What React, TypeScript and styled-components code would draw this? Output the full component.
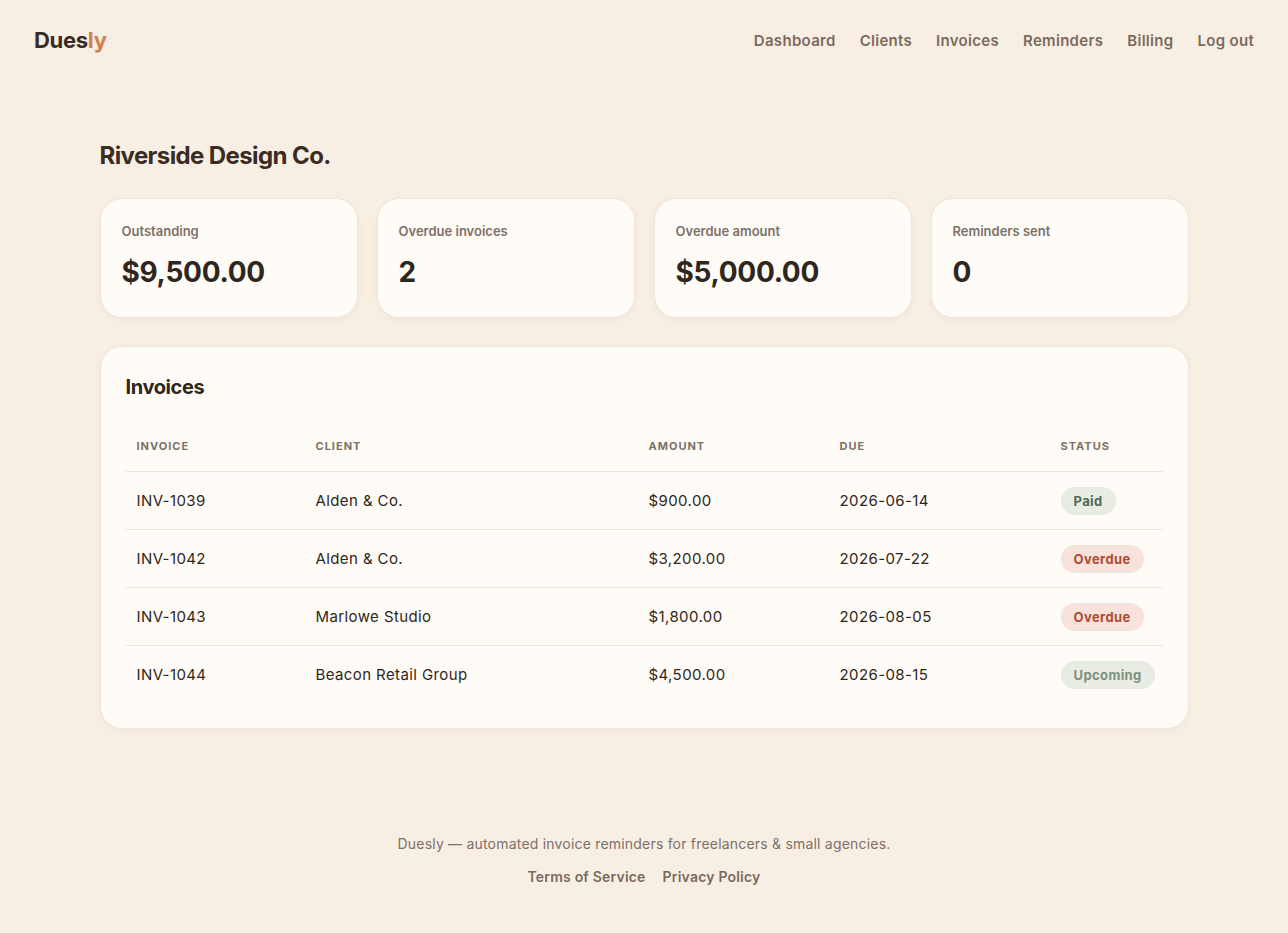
import React from 'react';
import styled, { createGlobalStyle } from 'styled-components';

const Global = createGlobalStyle`
  body { margin: 0; background: #f8efe4; font-family: Inter, "Open Sans", sans-serif; color: #2f2620; }
`;

const Header = styled.header`
  display: flex; align-items: center; justify-content: space-between;
  padding: 26px 34px 0 34px; height: 28px;
`;
const Logo = styled.div`
  font-size: 22px; font-weight: 700; letter-spacing: -0.3px; color: #3a2c22;
  span { color: #d27f4e; }
`;
const Nav = styled.nav`display: flex; gap: 24px;`;
const NavLink = styled.a`font-size: 15px; font-weight: 600; letter-spacing: 0.3px; color: #7a6a5e; text-decoration: none;`;

const Main = styled.main`width: 1089px; margin: 0 auto; padding-top: 87px;`;
const Title = styled.h1`font-size: 24px; font-weight: 700; letter-spacing: -0.6px; margin: 0 0 28px; color: #3a2c22;`;
const Stats = styled.div`display: grid; grid-template-columns: repeat(4, 1fr); gap: 19px;`;
const Card = styled.div`
  background: #fffcf7; border: 1px solid #efe5d9; border-radius: 22px;
  box-shadow: 0 2px 6px rgba(120, 90, 60, 0.06);
`;
const StatCard = styled(Card)`height: 120px; box-sizing: border-box; padding: 24px 21px;`;
const StatLabel = styled.div`font-size: 13px; font-weight: 600; color: #7d7068;`;
const StatValue = styled.div`font-size: 28px; font-weight: 700; letter-spacing: -0.3px; margin-top: 16px; color: #2f2620;`;

const TableCard = styled(Card)`margin-top: 28px; padding: 28px 25px 25px;`;
const CardTitle = styled.h2`font-size: 20px; font-weight: 700; letter-spacing: -0.4px; margin: 0 0 40px; color: #2f2620;`;
const Table = styled.table`width: 100%; border-collapse: collapse; table-layout: fixed;`;
const Th = styled.th<{ w?: number }>`
  text-align: left; font-size: 11px; font-weight: 700; letter-spacing: 1px; color: #7d7068;
  padding: 0 11px 18px; border-bottom: 1px solid #ece4da; width: ${p => (p.w ? `${p.w}px` : 'auto')};
`;
const Td = styled.td`font-size: 15px; color: #2f2620; padding: 0 11px; height: 57px; letter-spacing: 0.4px;`;
const Tr = styled.tr`& + & td { border-top: 1px solid #ece4da; }`;
const Badge = styled.span<{ kind: string }>`
  display: inline-block; padding: 6px 13px; border-radius: 14px; font-size: 13px; font-weight: 700;
  background: ${p => (p.kind === 'Overdue' ? '#f8e3dc' : '#e8ece2')};
  color: ${p => (p.kind === 'Overdue' ? '#b04a33' : p.kind === 'Paid' ? '#4f6a58' : '#7d917e')};
`;

const Footer = styled.footer`text-align: center; padding-top: 106px; font-size: 14px; letter-spacing: 0.2px; color: #7d7068;`;
const FootLinks = styled.div`display: flex; justify-content: center; gap: 17px; margin-top: 16px;`;
const FootLink = styled.a`font-weight: 600; color: #7a6a5e; text-decoration: none;`;

const stats = [
  ['Outstanding', '$9,500.00'],
  ['Overdue invoices', '2'],
  ['Overdue amount', '$5,000.00'],
  ['Reminders sent', '0'],
];
const rows = [
  ['INV-1039', 'Alden & Co.', '$900.00', '2026-06-14', 'Paid'],
  ['INV-1042', 'Alden & Co.', '$3,200.00', '2026-07-22', 'Overdue'],
  ['INV-1043', 'Marlowe Studio', '$1,800.00', '2026-08-05', 'Overdue'],
  ['INV-1044', 'Beacon Retail Group', '$4,500.00', '2026-08-15', 'Upcoming'],
];

export default function App() {
  return (
    <>
      <Global />
      <Header>
        <Logo>Dues<span>ly</span></Logo>
        <Nav>
          {['Dashboard', 'Clients', 'Invoices', 'Reminders', 'Billing', 'Log out'].map(n => (
            <NavLink key={n} href="#">{n}</NavLink>
          ))}
        </Nav>
      </Header>
      <Main>
        <Title>Riverside Design Co.</Title>
        <Stats>
          {stats.map(([l, v]) => (
            <StatCard key={l}>
              <StatLabel>{l}</StatLabel>
              <StatValue>{v}</StatValue>
            </StatCard>
          ))}
        </Stats>
        <TableCard>
          <CardTitle>Invoices</CardTitle>
          <Table>
            <thead>
              <tr>
                <Th w={157}>INVOICE</Th>
                <Th w={311}>CLIENT</Th>
                <Th w={169}>AMOUNT</Th>
                <Th w={199}>DUE</Th>
                <Th>STATUS</Th>
              </tr>
            </thead>
            <tbody>
              {rows.map(r => (
                <Tr key={r[0]}>
                  <Td>{r[0]}</Td>
                  <Td>{r[1]}</Td>
                  <Td>{r[2]}</Td>
                  <Td>{r[3]}</Td>
                  <Td><Badge kind={r[4]}>{r[4]}</Badge></Td>
                </Tr>
              ))}
            </tbody>
          </Table>
        </TableCard>
      </Main>
      <Footer>
        <div>Duesly — automated invoice reminders for freelancers &amp; small agencies.</div>
        <FootLinks>
          <FootLink href="#">Terms of Service</FootLink>
          <FootLink href="#">Privacy Policy</FootLink>
        </FootLinks>
      </Footer>
    </>
  );
}
